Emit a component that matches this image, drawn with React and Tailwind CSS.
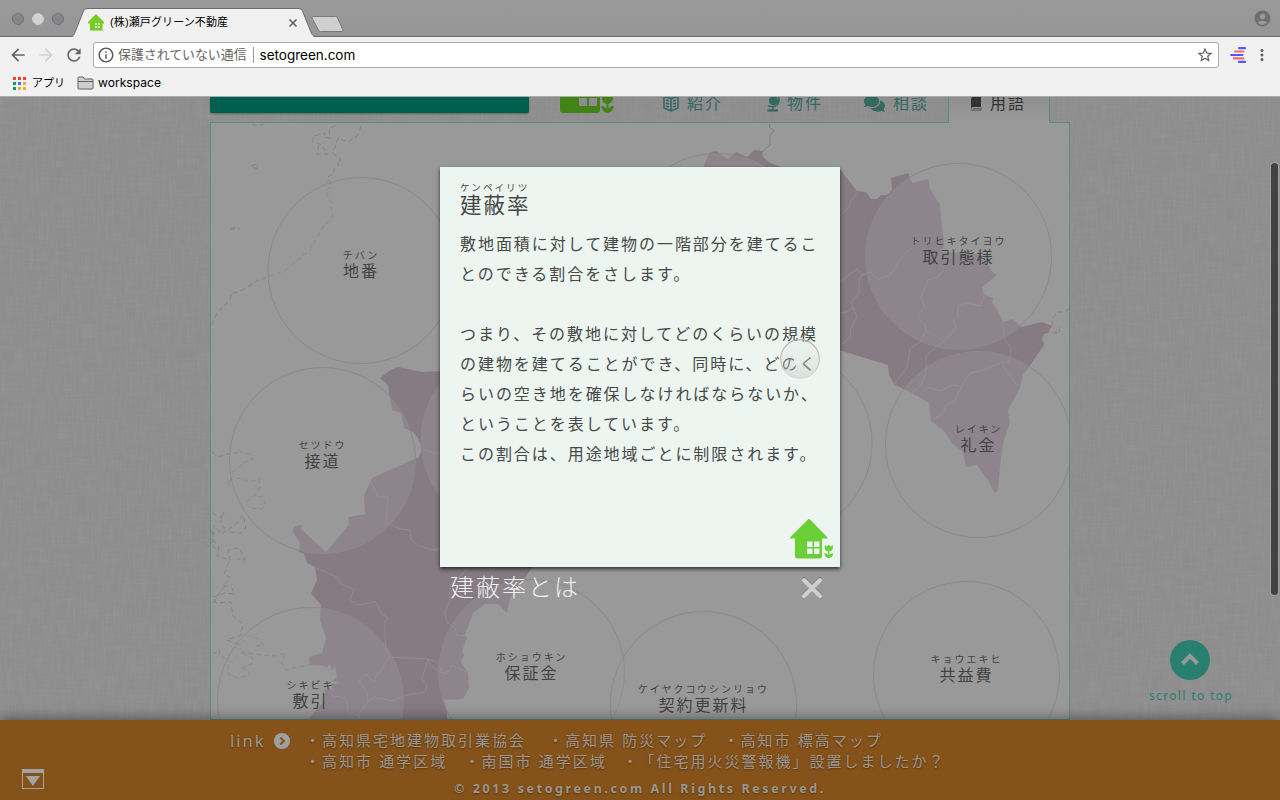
import React from "react";
import { FaComments } from "react-icons/fa";
import { MdAccountCircle, MdStarBorder, MdArrowBack, MdArrowForward, MdRefresh, MdInfoOutline, MdMoreVert } from "react-icons/md";

const LAND_WEST =
  "M380 378L389 371L398 367L422 372L440 371L540 371V567H532L527 575L510 598L507 613L498 604H485L473 613L465 635L467 638L462 651L464 655L461 662L468 673L469 688L463 699L444 700L447 713V720H308L315 712L325 700L323 692L328 688L333 690L331 684L339 683L333 681L337 677L335 666L332 671L330 664L326 668L325 666L310 665L309 657L322 653L326 638L320 620L321 605L311 593L317 580L315 567L307 563L304 554L299 552L300 543L293 532Q293 525 302 525L301 529L326 552L348 526L349 517L365 514L364 496L372 478L419 457L422 448L418 438L413 432L404 428L401 413L392 410L389 393L388 385Z";

const LAND_NORTH =
  "M703 168L709 153L716 151L728 159L736 152L747 157L754 150L762 151L763 157L770 163L785 168V200H703Z";

const LAND_EAST =
  "M839 168L857 191L866 192L871 199H877L881 195L887 195L892 190L891 178L908 173L912 183L928 179L930 189L940 205L942 227L944 243L942 252L977 254L990 267L992 272L997 275L982 287L984 295L993 298L992 303L998 310L1003 322L1013 319L1021 327L1042 322L1052 326L1048 333L1044 334L1042 339L1044 345L1035 358L1023 375L1020 388L1012 403L1008 410L1010 422L1003 443L1000 467L998 490L996 493L994 492L988 480L977 465L966 467L963 452L952 443L945 432L931 421L929 403L912 393L895 385L889 375L888 365L839 350Z";

const TOWN_LINES = [
  "M314 567L337 577L341 584L354 589L350 600L357 605L370 603L375 601L381 613L388 618L384 623L386 648L389 657L428 659L430 665L440 672L448 674",
  "M371 482L378 497H388L386 523L401 529L410 530L411 540L420 546L437 551L445 545",
  "M422 449L440 455M389 657L379 674L377 673L374 682L366 674L359 682L367 692L368 702L358 715L360 719",
  "M368 702L374 697L392 701L407 695L425 692L427 686L422 678L428 660",
  "M358 715L348 712L347 701L340 696L334 697L329 692M445 612L450 600V586L468 568",
  "M430 550L439 549M445 612L447 622L455 628L457 635L467 636M428 659L437 662L443 673L450 671L452 665L466 672",
  "M840 216L845 210L849 208L851 201L857 193M840 282L857 269L862 275L870 272L878 279L889 276L901 258L913 246L918 240",
  "M862 275L859 280V294L851 302L857 317L851 328L850 337L842 344M840 313L847 312L854 307",
  "M943 248L936 262L944 269L938 277L928 280L921 297L925 308L918 315L919 320L925 325L926 331L944 341L926 355V373L921 385L912 393",
  "M944 341L956 328L953 320L958 316V307L965 303L981 306L984 295",
  "M926 331L920 342L910 349L907 368L897 380L895 385",
  "M1003 322L1004 338L1011 348L1009 362L1002 362L984 370L970 373L962 386L952 385L941 391L927 387L920 395M1002 362L1005 370L1018 386",
  "M931 421L943 413L946 405L955 401L957 395L963 385",
];

const COAST_LINES = [
  "M361 126L358 135L348 142L338 138L333 153L341 160L337 162L339 165L334 168V173L328 177L331 187L326 190L329 200L333 203L331 208L333 216L331 219L323 227L310 250L284 271L257 281L239 292L232 293L230 300L217 313L212 325",
  "M335 126L329 128L330 138L324 137L325 133L314 136L312 141L320 144L328 154L317 154L319 142",
  "M252 124L257 126L264 124M251 166L258 164L257 168L259 170ZM231 229L237 226L240 229Z",
  "M212 452L218 457L228 454L237 453L239 449L242 453L250 454L253 459L245 462L233 472L231 480L240 478L249 482L259 479L260 487L254 496L245 503L249 508L261 509L266 505L262 497L256 496",
  "M231 479L227 485L230 484M212 513L221 518L224 512L220 524L227 530L222 534L214 525L213 540L219 547L217 556L230 560L228 550L239 548L245 560L237 559",
  "M228 530L238 522L243 515L246 528L241 533L230 532M229 562L224 574L231 578L223 585L232 588L234 594L225 593L213 597L216 603L231 602L233 616L243 624L241 635L227 640L240 645L249 636L259 639L264 645L255 646",
  "M213 654L220 650L219 655L231 662L243 652L261 655L276 656L286 653L281 662L286 670L297 667L311 665M229 664L228 674L238 678L250 675L248 670L240 668L252 664L253 658L243 654",
  "M212 530V545L219 552M213 603L221 590L226 586M1052 326L1053 318L1057 312L1065 312L1069 309M1054 333L1059 327L1060 333Z",
];

const TERMS = [
  { cx: 361, cy: 270.5, ruby: "チバン", term: "地番" },
  { cx: 322.5, cy: 460.5, ruby: "セツドウ", term: "接道" },
  { cx: 310.5, cy: 700.5, ruby: "シキビキ", term: "敷引" },
  { cx: 958.5, cy: 256.5, ruby: "トリヒキタイヨウ", term: "取引態様" },
  { cx: 978.5, cy: 444.5, ruby: "レイキン", term: "礼金" },
  { cx: 966.5, cy: 674.5, ruby: "キョウエキヒ", term: "共益費" },
  { cx: 531.5, cy: 672.5, ruby: "ホショウキン", term: "保証金" },
  { cx: 703.5, cy: 704.5, ruby: "ケイヤクコウシンリョウ", term: "契約更新料" },
  { cx: 717, cy: 246.5 },
  { cx: 779, cy: 443 },
  { cx: 514, cy: 440 },
];

const JP = "font-['Liberation_Sans','Noto_Sans_CJK_JP',sans-serif]";

function HouseLogo({ className }) {
  return (
    <svg viewBox="0 0 44 40" className={className} fill="currentColor">
      <path d="M18.500 0L0 18.500V19.500H5V37Q5 39.500 7.500 39.500H29.500Q32 39.500 32 37V19.500H37.500V18.500L19.500 0Z" />
      <path d="M17 22.500h5.500v5.500H17zM24 22.500h5.500v5.500H24zM17 29.500h5.500v5.500H17zM24 29.500h5.500v5.500H24z" fill="#ecf5f0" />
      <path d="M34.800 26l2 1.500L38.800 25.800l2 1.700 2-1.500v3.500q0 2.300-3.300 2.800v4q1-2.500 3.800-2-.5 4.500-4.500 5-4-.5-4.500-5 2.800-.5 3.800 2V32.300q-3.300-.5-3.300-2.800Z" />
    </svg>
  );
}

function BrowserChrome() {
  return (
    <header className="flex h-[97px] shrink-0 flex-col border-b border-[#acacac] bg-[#f1f1f1]">
      <div className="relative flex h-[37px] items-start bg-linear-to-b from-[#999] to-[#969696]">
        <div className="absolute inset-x-0 bottom-0 h-px bg-[#6c6c6c]" />
        <div className="flex w-[72px] shrink-0 gap-2 pt-[13px] pl-3">
          <i className="size-3 rounded-full border border-[#717178] bg-[#86868c]" />
          <i className="size-3 rounded-full border border-[#c8c8c8] bg-[#d2d2d2]" />
          <i className="size-3 rounded-full border border-[#717178] bg-[#86868c]" />
        </div>
        <div className="relative mt-2 h-[29px] w-[243px]">
          <svg viewBox="0 0 243 29" className="absolute inset-0 h-[29px] w-[243px]">
            <path d="M0 28.500Q1.500 28 2.500 25.500L11.500 3Q12.500 .5 15 .5H227Q229.500 .5 230.500 3L239.500 25.500Q240.500 28 243 28.500V29H0Z" fill="#f1f1f1" stroke="#6c6c6c" />
            <path d="M1.500 28.500H241" stroke="#f1f1f1" strokeWidth="2" />
          </svg>
          <div className={`relative flex h-[29px] items-center pl-4 text-[11px] tracking-[.12px] text-black ${JP}`}>
            <svg viewBox="0 0 16 17" className="h-[17px] w-4" fill="#73cf1f">
              <path d="M8 0L0 8v1.500H2V16q0 .5.500.5h11.500q.5 0 .5-.5V9.500H16V8Z" />
              <path d="M7 9h2v2H7zM10 9h2v2h-2zM7 12h2v2H7zM10 12h2v2h-2z" fill="#f1f1f1" />
            </svg>
            <span className="ml-[6px] whitespace-nowrap">(株)瀬戸グリーン不動産</span>
            <svg viewBox="0 0 8 8" className="ml-auto mr-[18px] size-2" stroke="#5a5a5a" strokeWidth="1.500">
              <path d="M.5 .5l7 7M7.500 .5l-7 7" />
            </svg>
          </div>
        </div>
        <svg viewBox="0 0 36 18" className="mt-[15px] -ml-1 h-[18px] w-9">
          <path d="M2 1.500H24.500Q26 1.500 26.500 3L32 15Q32.500 16.500 31 16.500H9.500Q8 16.500 7.500 15L1 3Q.5 1.500 2 1.500Z" fill="#d0d0d0" stroke="#7a7a7a" />
        </svg>
        <MdAccountCircle className="mt-[9px] ml-auto mr-[8px] size-[19px] text-[#6d6f75]" />
      </div>

      <div className="flex h-[36px] shrink-0 items-center pl-2">
        <MdArrowBack className="size-5 text-[#646569]" />
        <MdArrowForward className="ml-2 size-5 text-[#d3d3d5]" />
        <MdRefresh className="ml-[8px] size-5 text-[#646569]" />
        <div className="ml-[9px] flex h-[26px] w-[1126px] items-center rounded-[3px] border border-[#acacac] bg-white pl-[3px]">
          <MdInfoOutline className="size-[18px] text-[#5a5a5e]" />
          <span className={`ml-[3px] text-[12.9px] text-[#646464] ${JP}`}>保護されていない通信</span>
          <i className="ml-[6px] h-4 w-px bg-[#9c9c9c]" />
          <span className="ml-[6px] font-['Inter',sans-serif] text-[13.5px] text-black">setogreen.com</span>
          <MdStarBorder className="ml-auto mr-[4px] size-[18px] text-[#5f6064]" />
        </div>
        <svg viewBox="0 0 16 16" className="ml-[11px] size-4" strokeWidth="2.200" strokeLinecap="round">
          <path d="M9 1.100H15M1.200 8H12.500M9 14.900H15" stroke="#4b5cff" />
          <path d="M5 4.500H13.500M4 11.400H13.500" stroke="#ff6b6b" />
        </svg>
        <MdMoreVert className="ml-[7px] size-[18px] text-[#5f5f66]" />
      </div>

      <div className={`flex h-[20px] items-center pl-[13px] text-[12px] text-black ${JP}`}>
        <div className="grid grid-cols-3 gap-[2px]">
          <i className="size-[3px] bg-[#f93c3c]" /><i className="size-[3px] bg-[#f93c3c]" /><i className="size-[3px] bg-[#f93c3c]" />
          <i className="size-[3px] bg-[#0f9d58]" /><i className="size-[3px] bg-[#1a84ff]" /><i className="size-[3px] bg-[#fda836]" />
          <i className="size-[3px] bg-[#0f9d58]" /><i className="size-[3px] bg-[#fda836]" /><i className="size-[3px] bg-[#fda836]" />
        </div>
        <span className="ml-[6px] w-[33px] whitespace-nowrap text-[11px]">アプリ</span>
        <svg viewBox="0 0 17 14" className="ml-3 h-[14px] w-[17px]" fill="#cfcfcf" stroke="#606060">
          <path d="M1 12.500V2Q1 1 2 1H6L7.500 3H15Q16 3 16 4V12Q16 13 15 13H2Q1 13 1 12.500ZM1 5.500H16" />
        </svg>
        <span className="ml-[4px] font-['Inter',sans-serif] text-[12.100px]">workspace</span>
      </div>
    </header>
  );
}

function LinenBackground() {
  return (
    <svg className="absolute inset-0 h-full w-full">
      <filter id="weft" x="0" y="0" width="100%" height="100%">
        <feTurbulence type="fractalNoise" baseFrequency="0.04 0.5" numOctaves="2" seed="3" />
        <feColorMatrix values="0 0 0 0 .45  0 0 0 0 .45  0 0 0 0 .46  1.200 0 0 0 -.45" />
      </filter>
      <filter id="warp" x="0" y="0" width="100%" height="100%">
        <feTurbulence type="fractalNoise" baseFrequency="0.5 0.04" numOctaves="2" seed="8" />
        <feColorMatrix values="0 0 0 0 .68  0 0 0 0 .68  0 0 0 0 .68  1.200 0 0 0 -.45" />
      </filter>
      <rect width="100%" height="100%" fill="#8d8d8d" />
      <rect width="100%" height="100%" filter="url(#weft)" opacity=".15" />
      <rect width="100%" height="100%" filter="url(#warp)" opacity=".1" />
    </svg>
  );
}

function SiteNav() {
  return (
    <nav className={`flex h-[25px] text-[16px] tracking-[2px] text-[#35695f] ${JP}`}>
      <div className="h-4 w-[319px] rounded-b-[2px] bg-[#00604f] shadow-[0_1px_2px_rgba(0,0,0,.3)]" />
      <svg viewBox="0 0 54 17" className="ml-[31px] h-[17px] w-[54px]" fill="#428318">
        <path d="M0 0H40V13Q40 16 37 16H3Q0 16 0 13Z" />
        <path d="M19 1h8v8h-8zM29 1h8v8h-8z" fill="#8d8d8d" />
        <path d="M42 0H53V2Q52 6 48.500 7V12Q50 8.500 54 9Q53 15 47.500 16Q42 15 41 9Q45 8.500 46.500 12V7Q43 6 42 2Z" />
      </svg>
      <div className="-mt-[6px] ml-[49px] flex h-6 w-[103px] items-center gap-2">
        <svg viewBox="0 0 16 17" className="h-[17px] w-4 shrink-0" fill="none" stroke="currentColor" strokeWidth="1.600">
          <path d="M8 3.500L1 1.500V13L8 16L15 13V1.500L8 3.500V16M3 5l3 1M3 8l3 1M3 11l3 1M13 5l-3 1M13 8l-3 1M13 11l-3 1" />
        </svg>
        <span className="pt-px">紹介</span>
      </div>
      <div className="-mt-[6px] flex h-6 w-[98px] items-center gap-[7px]">
        <svg viewBox="0 0 14 17" className="h-[17px] w-[14px] shrink-0" fill="currentColor">
          <circle cx="7.500" cy="5.800" r="4.600" />
          <path d="M12 .5Q14.500 6 11 10Q7.500 13 2 10.800M7 12V15" fill="none" stroke="currentColor" strokeWidth="1.500" />
          <path d="M1.500 14.300H12V16.600H1.500Z" />
        </svg>
        <span className="pt-px">物件</span>
      </div>
      <div className="-mt-[6px] flex h-6 w-[84px] items-center gap-2">
        <FaComments className="size-[21px] shrink-0" />
        <span className="pt-px">相談</span>
      </div>
      <div className="relative z-10 flex h-[26px] w-[102px] items-start border-x border-[#5c8c80] bg-linear-to-b from-[#909090] to-[#999] text-[#333]">
        <div className="-mt-[6px] flex h-6 items-center gap-2 pl-[21px]">
          <svg viewBox="0 0 12 15" className="h-[15px] w-3">
            <path d="M3 1H11V11H3Q1 11 1 13V3Q1 1 3 1Z" fill="#333" />
            <path d="M1 12.500Q1 14.300 2.500 14.300H11V11.300M3 12.700H10.500" fill="none" stroke="#555" strokeWidth=".9" />
          </svg>
          <span className="pt-px">用語</span>
        </div>
      </div>
    </nav>
  );
}

function TermMap() {
  return (
    <section className="relative h-[598px] overflow-hidden border border-[#5c8c80] bg-[#999]">
      <svg viewBox="211 123 858 597" className="absolute top-0 left-0 h-[597px] w-[858px]">
        <g fill="#867a83">
          <path d={LAND_WEST} />
          <path d={LAND_NORTH} />
          <path d={LAND_EAST} />
        </g>
        <g fill="none" stroke="#95898f" strokeWidth="1">
          {TOWN_LINES.map((d) => <path key={d} d={d} />)}
        </g>
        <g fill="none" stroke="#857b80" strokeWidth=".8" strokeDasharray="5 3">
          {COAST_LINES.map((d) => <path key={d} d={d} />)}
        </g>
        <path d="M770 124L769 127L774 131L770 136V145L762 152" fill="none" stroke="#867a83" />
        <g fill="#999999" fillOpacity=".38" stroke="#8a8a8a" strokeWidth="1">
          {TERMS.map((t) => <circle key={`${t.cx}-${t.cy}`} cx={t.cx} cy={t.cy} r="93" />)}
        </g>
      </svg>
      {TERMS.filter((t) => t.term).map((t) => (
        <div
          key={t.term}
          className={`absolute flex w-[186px] -translate-x-1/2 -translate-y-1/2 flex-col items-center whitespace-nowrap text-[#434343] ${JP}`}
          style={{ left: t.cx - 211, top: t.cy - 129 }}
        >
          <span className="text-[10px] leading-[14px] tracking-[2px]">{t.ruby}</span>
          <span className="text-[16px] leading-[18px] tracking-[2px]">{t.term}</span>
        </div>
      ))}
    </section>
  );
}

function TermDialog() {
  return (
    <div className={`absolute top-[70px] left-[440px] w-[400px] ${JP}`}>
      <article className="relative h-[400px] bg-[#ecf5f0] px-5 pt-[15px] text-[16px] tracking-[2px] text-[#484848] shadow-[0_2px_4px_rgba(0,0,0,.7)]">
        <h2 className="flex flex-col font-normal">
          <span className="text-[9.600px] leading-[12px] tracking-[2px]">ケンペイリツ</span>
          <span className="text-[21.500px] leading-6">建蔽率</span>
        </h2>
        <p className="mt-[12px] whitespace-pre leading-[30px] tracking-[1.950px] [text-spacing-trim:space-all]">{`敷地面積に対して建物の一階部分を建てるこ
とのできる割合をさします。

つまり、その敷地に対してどのくらいの規模
の建物を建てることができ、同時に、どのく
らいの空き地を確保しなければならないか、
ということを表しています。
この割合は、用途地域ごとに制限されます。`}</p>
        <HouseLogo className="absolute right-[6px] bottom-[8px] h-10 w-11 text-[#6bd038]" />
        <svg viewBox="0 0 40 40" className="absolute top-[172px] left-[340px] size-10">
          <defs>
            <linearGradient id="disc" x1="0" y1="0" x2="0" y2="1">
              <stop offset="0" stopColor="#e0e5e2" stopOpacity=".1" />
              <stop offset="1" stopColor="#c4cac7" stopOpacity=".5" />
            </linearGradient>
            <linearGradient id="rim" x1="0" y1="0" x2="0" y2="1">
              <stop offset="0" stopColor="#a9afac" />
              <stop offset="1" stopColor="#d5dad7" />
            </linearGradient>
          </defs>
          <circle cx="20" cy="20" r="19.300" fill="url(#disc)" stroke="url(#rim)" strokeWidth="1.200" />
          <path d="M15 13L26.500 20L13 28Z" fill="#e9efec" />
        </svg>
      </article>
      <div className="flex items-start justify-between pt-[5px] pr-[17px] pl-[10px]">
        <span className="text-[24px] leading-8 font-light tracking-[2px] text-[#ecf2f2]">建蔽率とは</span>
        <svg viewBox="0 0 22 22" className="mt-[5px] size-[22px]" fill="none" strokeWidth="4" strokeLinecap="round">
          <path d="M3 2L19 18M19 2L3 18" stroke="#7a7a7a" />
          <path d="M3 3L19 19M19 3L3 19" stroke="#cfcfcf" />
        </svg>
      </div>
    </div>
  );
}

function SiteFooter() {
  return (
    <footer className={`absolute inset-x-0 bottom-0 flex h-20 bg-[#85531a] text-[15px] tracking-[2px] text-[#9c968e] shadow-[0_-2px_12px_rgba(0,0,0,.4)] [text-shadow:0_1px_2px_rgba(40,20,0,.5)] ${JP}`}>
      <svg viewBox="0 0 22 20" className="mt-[49px] ml-[22px] h-5 w-[22px]" fill="#a3a3a3">
        <path d="M0 0H22V20H0ZM1 4V19H21V4Z" fillRule="evenodd" />
        <path d="M4 7H18L11 17Z" />
      </svg>
      <div className="mt-[10px] ml-[186px] flex h-[22px] w-[75px] items-center font-['Noto_Sans',sans-serif] text-[16.500px]">
        <span>link</span>
        <svg viewBox="0 0 16 16" className="ml-[8px] size-4 shrink-0">
          <circle cx="8" cy="8" r="8" fill="#a0a0a0" />
          <path d="M6.300 4.500L9.800 8L6.300 11.500" fill="none" stroke="#85531a" strokeWidth="2.200" />
        </svg>
      </div>
      <div className="w-[660px] pt-[10px] whitespace-nowrap leading-[21px] [text-spacing-trim:space-all]">
        <div className="flex">
          <a className="w-[243px]">・高知県宅地建物取引業協会</a>
          <a className="w-[175.500px]">・高知県&nbsp;防災マップ</a>
          <a>・高知市&nbsp;標高マップ</a>
        </div>
        <div className="flex">
          <a className="w-[159.500px]">・高知市&nbsp;通学区域</a>
          <a className="w-[158px]">・南国市&nbsp;通学区域</a>
          <a>・「住宅用火災警報機」設置しましたか？</a>
        </div>
        <p className="mt-[9px] pl-[149px] font-['Noto_Sans',sans-serif] text-[12.500px] leading-4 font-bold tracking-[2.600px]">
          © 2013 setogreen.com All Rights Reserved.
        </p>
      </div>
    </footer>
  );
}

export default function App() {
  return (
    <div className="flex h-[800px] w-[1280px] flex-col overflow-hidden bg-[#8d8d8d]">
      <BrowserChrome />
      <main className="relative h-[703px] overflow-hidden">
        <LinenBackground />
        <div className="relative mx-auto w-[860px]">
          <SiteNav />
          <TermMap />
        </div>
        <div className="absolute top-[543px] left-[1140px] flex w-[100px] flex-col items-center">
          <svg viewBox="0 0 40 40" className="size-10">
            <circle cx="20" cy="20" r="20" fill="#2a8070" />
            <path d="M12.500 23.500L20 16L27.500 23.500" fill="none" stroke="#999" strokeWidth="4" />
          </svg>
          <span className="mt-[8px] pl-[2px] font-['Noto_Sans',sans-serif] text-[12px] leading-4 tracking-[1.350px] whitespace-nowrap text-[#2a8070]">scroll to top</span>
        </div>
        <SiteFooter />
        <TermDialog />
        <div className="absolute top-[66px] right-[2px] h-[432px] w-[7px] rounded-full bg-[#434343] ring-1 ring-[#a0a0a0]" />
      </main>
    </div>
  );
}
